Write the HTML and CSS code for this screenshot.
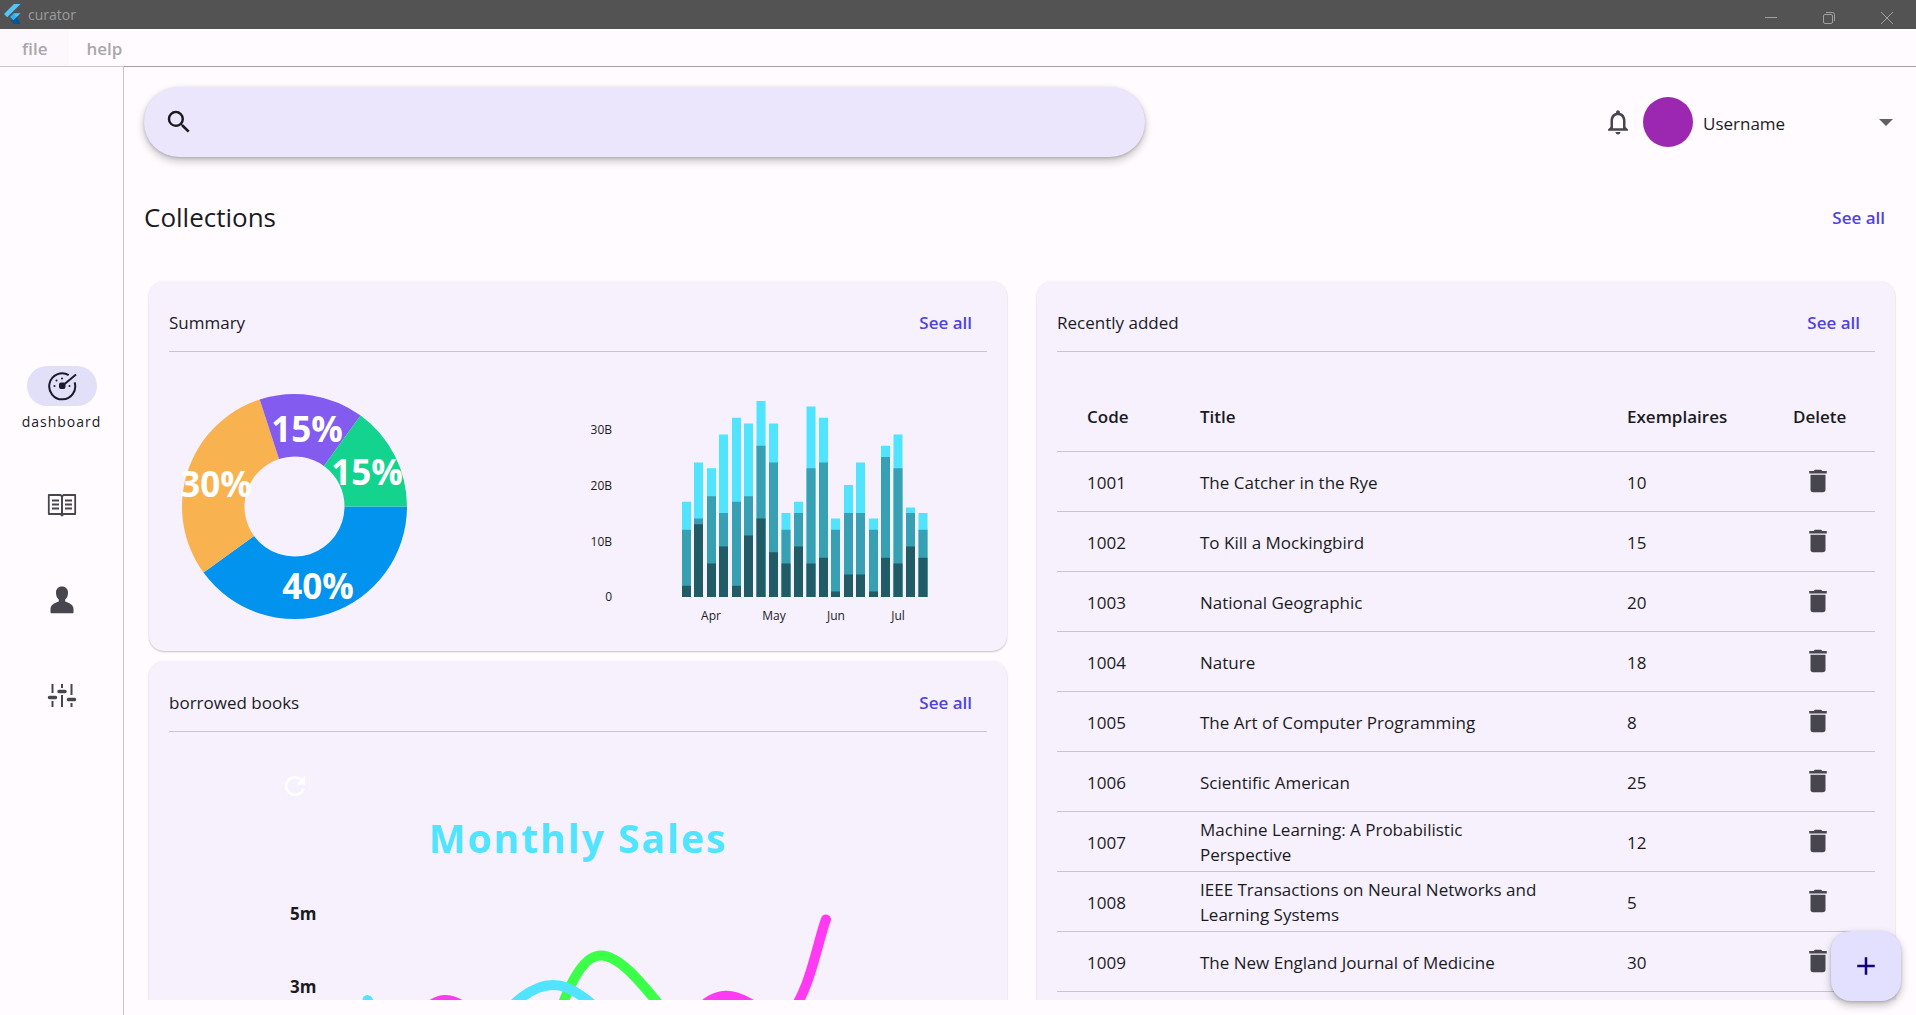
FILE: index.html
```html
<!DOCTYPE html>
<html lang="en">
<head>
<meta charset="utf-8">
<title>curator</title>
<link rel="stylesheet" href="styles.css">
</head>
<body>
<div class="window">
  <header class="titlebar">
    <svg class="logo" width="17" height="20" viewBox="0 0 17 20" aria-hidden="true">
      <path d="M10 0h6.500L3.200 13.300 0 10z" fill="#54c5f8"/>
      <path d="M10 9.300h6.500L9.700 16 6.400 12.900z" fill="#54c5f8"/>
      <path d="M6.400 12.900 9.700 9.700 13 13 9.700 16.200z" fill="#29b6f6"/>
      <path d="M9.700 16.200 13 13l3.500 7H10L6.400 16.300z" fill="#01579b"/>
    </svg>
    <span class="app-name">curator</span>
    <div class="window-controls">
      <button class="window-button" aria-label="Minimize"><svg width="14" height="14" viewBox="0 0 14 14"><path d="M1 6.500h12"/></svg></button>
      <button class="window-button" aria-label="Restore"><svg width="14" height="14" viewBox="0 0 14 14"><rect x="1.500" y="3.500" width="9" height="9" rx="1.500"/><path d="M4 1.500h6.500a2 2 0 0 1 2 2V10"/></svg></button>
      <button class="window-button" aria-label="Close"><svg width="14" height="14" viewBox="0 0 14 14"><path d="M1 1l12 12M13 1 1 13"/></svg></button>
    </div>
  </header>

  <nav class="menubar">
    <button class="menu-button menu-active">file</button>
    <button class="menu-button">help</button>
  </nav>

  <div class="workspace">
    <nav class="rail">
      <a class="rail-item rail-current" href="#dashboard">
        <span class="rail-pill">
          <svg width="30" height="30" viewBox="0 0 30 30" fill="none" stroke="#1a1a2c" stroke-width="2">
            <path d="M21.700 4.100A13 13 0 1 0 27.600 11.400M17 13.500 29 3.500"/>
            <rect x="13" y="12.500" width="4.500" height="4.500" rx="1" fill="#1a1a2c"/>
            <g fill="#1a1a2c" stroke="none"><circle cx="7.500" cy="15" r="1"/><circle cx="9.500" cy="9.500" r="1"/><circle cx="15" cy="7.500" r="1"/><circle cx="22.500" cy="15" r="1"/></g>
          </svg>
        </span>
        <span class="rail-label">dashboard</span>
      </a>
      <a class="rail-item" href="#books" aria-label="Books">
        <svg width="30" height="30" viewBox="0 0 30 30" fill="none" stroke="#47464f" stroke-width="1.800">
          <path d="M15 6.500 13.500 5H1.800v19h11.700L15 25.500 16.500 24h11.700V5H16.500z" stroke-linejoin="round"/>
          <path d="M15 6v19" stroke-width="2"/>
          <path d="M5 10.500h7M5 14.500h7M5 18.500h7M18 10.500h7M18 14.500h7M18 18.500h7"/>
        </svg>
      </a>
      <a class="rail-item" href="#members" aria-label="Members">
        <svg width="30" height="30" viewBox="0 0 30 30" fill="#47464f">
          <path d="M15 1.500c-3.500 0-6 2.300-6 6.200 0 3 1 5.300 2.800 6.900v1.800c-4 1.500-8.300 3-8.300 7.600v3.200c0 .6.400 1 1 1h21c.6 0 1-.4 1-1V24c0-4.600-4.300-6.100-8.300-7.600v-1.800C20 13 21 10.700 21 7.700c0-3.900-2.500-6.200-6-6.200z"/>
        </svg>
      </a>
      <a class="rail-item" href="#settings" aria-label="Settings">
        <svg width="30" height="30" viewBox="0 0 30 30" fill="none" stroke="#47464f" stroke-width="2">
          <path d="M5.500 4v9M5.500 21v6M15 4v4M15 15v12M24.500 4v11M24.500 23v4"/>
          <path d="M2.500 17.500h6M12 11.500h6M21.500 19.500h6" stroke-width="3.500" stroke-linecap="round"/>
        </svg>
      </a>
    </nav>

    <main class="main">
      <div class="topbar">
        <label class="search">
          <svg width="30" height="30" viewBox="0 0 24 24" fill="#1b1b1f"><path d="M15.500 14h-.79l-.28-.27A6.471 6.471 0 0 0 16 9.500 6.500 6.500 0 1 0 9.500 16c1.610 0 3.090-.59 4.230-1.570l.27.28v.79l5 4.990L20.490 19l-4.990-5zm-6 0C7.010 14 5 11.990 5 9.500S7.010 5 9.500 5 14 7.010 14 9.500 11.990 14 9.500 14z"/></svg>
          <input class="search-input" type="search" aria-label="Search">
        </label>
        <div class="account">
          <button class="icon-button" aria-label="Notifications">
            <svg width="30" height="30" viewBox="0 0 24 24" fill="#47464f"><path d="M12 22c1.100 0 2-.9 2-2h-4c0 1.100.9 2 2 2zm6-6v-5c0-3.070-1.630-5.640-4.500-6.320V4c0-.83-.67-1.500-1.500-1.500s-1.500.67-1.500 1.500v.68C7.640 5.360 6 7.920 6 11v5l-2 2v1h16v-1l-2-2zm-2 1H8v-6c0-2.480 1.510-4.500 4-4.500s4 2.020 4 4.500v6z"/></svg>
          </button>
          <span class="avatar"></span>
          <span class="user-field">
            <select class="user-select" aria-label="Account"><option>Username</option></select>
            <svg class="user-arrow" width="14" height="7" viewBox="0 0 14 7"><path d="M0 0h14L7 7z" fill="#606060"/></svg>
          </span>
        </div>
      </div>

      <div class="section-head">
        <h1 class="section-title">Collections</h1>
        <a class="see-all" href="#collections">See all</a>
      </div>

      <div class="board">
        <div class="column">
          <section class="card">
            <div class="card-head">
              <h2 class="card-title">Summary</h2>
              <a class="see-all" href="#summary">See all</a>
            </div>
            <div class="summary">
              <svg class="pie" width="225" height="225" viewBox="0 0 225 225">
                <path fill="#0293ee" d="M225 112.500A112.500 112.500 0 0 1 21.500 178.600L72 141.900A50 50 0 0 0 162.500 112.500z"/>
                <path fill="#f8b250" d="M21.500 178.600A112.500 112.500 0 0 1 77.700 5.500L97 65A50 50 0 0 0 72 141.900z"/>
                <path fill="#845bef" d="M77.700 5.500A112.500 112.500 0 0 1 178.600 21.500L141.900 72A50 50 0 0 0 97 65z"/>
                <path fill="#13d38e" d="M178.600 21.500A112.500 112.500 0 0 1 225 112.500H162.500A50 50 0 0 0 141.900 72z"/>
                <text class="pie-label" x="136" y="205">40%</text>
                <text class="pie-label" x="34" y="103">30%</text>
                <text class="pie-label" x="125" y="48">15%</text>
                <text class="pie-label" x="185" y="91">15%</text>
              </svg>
              <svg class="bars" width="360" height="236" viewBox="0 0 360 236">
                <g fill="none" stroke-width="9" transform="translate(0 203) scale(1 -5.600)">
                  <path stroke="#50e4ff" d="M106.500 0V17M118.500 0V24M131.500 0V23M143.500 0V29M156.500 0V32M168.500 0V31M181 0V35M193.500 0V31M206 0V15M218.500 0V17M231 0V34M243.500 0V32M255.500 0V14M268.500 0V20M280.500 0V24M293.500 0V14M305.500 0V27M318 0V29M330.500 0V16M343 0V15"/>
                  <path stroke="#38a0b3" d="M106.500 0V12M118.500 0V14M131.500 0V18M143.500 0V15M156.500 0V17M168.500 0V18M181 0V27M193.500 0V24M206 0V12M218.500 0V15M231 0V23M243.500 0V24M255.500 0V12M268.500 0V15M280.500 0V15M293.500 0V12M305.500 0V25M318 0V23M330.500 0V15M343 0V12"/>
                  <path stroke="#205b66" d="M106.500 0V2M118.500 0V13M131.500 0V6M143.500 0V9M156.500 0V2M168.500 0V11M181 0V14M193.500 0V8M206 0V6M218.500 0V9M231 0V6M243.500 0V7M255.500 0V1M268.500 0V4M280.500 0V4M293.500 0V1M305.500 0V7M318 0V6M330.500 0V9M343 0V7"/>
                </g>
                <g class="axis axis-y">
                  <text x="32" y="40">30B</text>
                  <text x="32" y="96">20B</text>
                  <text x="32" y="152">10B</text>
                  <text x="32" y="207">0</text>
                </g>
                <g class="axis axis-x">
                  <text x="131" y="226">Apr</text>
                  <text x="194" y="226">May</text>
                  <text x="256" y="226">Jun</text>
                  <text x="318" y="226">Jul</text>
                </g>
              </svg>
            </div>
          </section>

          <section class="card">
            <div class="card-head">
              <h2 class="card-title">borrowed books</h2>
              <a class="see-all" href="#borrowed">See all</a>
            </div>
            <div class="sales">
              <button class="icon-button" aria-label="Refresh">
                <svg width="30" height="30" viewBox="0 0 24 24" fill="#fff"><path d="M17.650 6.350A7.958 7.958 0 0 0 12 4c-4.420 0-7.990 3.580-7.990 8s3.570 8 7.990 8c3.730 0 6.840-2.550 7.730-6h-2.080A5.990 5.990 0 0 1 12 18c-3.310 0-6-2.690-6-6s2.690-6 6-6c1.660 0 3.140.69 4.220 1.780L13 11h7V4l-2.350 2.350z"/></svg>
              </button>
              <h3 class="sales-title">Monthly Sales</h3>
              <svg class="lines" width="596" height="260" viewBox="280 900 596 260">
                <g fill="none" stroke-width="10" stroke-linecap="round">
                  <path stroke="#3bff49" d="M367.500 1132C367.500 1132 417 1100 444 1095S494 1127 520 1102.500 563 964 596.700 956 678 1043 711 1058.600 768 1041 788 1044 819 1068 826 1073"/>
                  <path stroke="#ff3af2" d="M367.500 1132C367.500 1132 404 1002.600 444 1000S550 1117 596.700 1117 678 1018 711 1000 768 1029 788 1014.700 819 936 826 919.500"/>
                  <path stroke="#50e4ff" d="M367.500 1000C367.500 1000 410.500 1068.500 444 1066S512 978 558.500 985.400 664.500 1103 711 1110 806 1037 826 1022"/>
                </g>
                <text class="sales-axis" x="290" y="920">5m</text>
                <text class="sales-axis" x="290" y="993">3m</text>
              </svg>
            </div>
          </section>
        </div>

        <section class="card">
          <div class="card-head">
            <h2 class="card-title">Recently added</h2>
            <a class="see-all" href="#recent">See all</a>
          </div>
          <svg class="symbols" width="0" height="0" aria-hidden="true">
            <symbol id="trash" viewBox="0 0 24 24"><path d="M6 19c0 1.100.9 2 2 2h8c1.100 0 2-.9 2-2V7H6v12zM19 4h-3.500l-1-1h-5l-1 1H5v2h14V4z"/></symbol>
          </svg>
          <table class="books">
            <thead>
              <tr><th class="col-code">Code</th><th class="col-title">Title</th><th class="col-count">Exemplaires</th><th class="col-delete">Delete</th></tr>
            </thead>
            <tbody>
              <tr><td>1001</td><td>The Catcher in the Rye</td><td>10</td><td><button class="icon-button trash" aria-label="Delete 1001"><svg width="30" height="30"><use href="#trash"/></svg></button></td></tr>
              <tr><td>1002</td><td>To Kill a Mockingbird</td><td>15</td><td><button class="icon-button trash" aria-label="Delete 1002"><svg width="30" height="30"><use href="#trash"/></svg></button></td></tr>
              <tr><td>1003</td><td>National Geographic</td><td>20</td><td><button class="icon-button trash" aria-label="Delete 1003"><svg width="30" height="30"><use href="#trash"/></svg></button></td></tr>
              <tr><td>1004</td><td>Nature</td><td>18</td><td><button class="icon-button trash" aria-label="Delete 1004"><svg width="30" height="30"><use href="#trash"/></svg></button></td></tr>
              <tr><td>1005</td><td>The Art of Computer Programming</td><td>8</td><td><button class="icon-button trash" aria-label="Delete 1005"><svg width="30" height="30"><use href="#trash"/></svg></button></td></tr>
              <tr><td>1006</td><td>Scientific American</td><td>25</td><td><button class="icon-button trash" aria-label="Delete 1006"><svg width="30" height="30"><use href="#trash"/></svg></button></td></tr>
              <tr><td>1007</td><td>Machine Learning: A Probabilistic Perspective</td><td>12</td><td><button class="icon-button trash" aria-label="Delete 1007"><svg width="30" height="30"><use href="#trash"/></svg></button></td></tr>
              <tr><td>1008</td><td>IEEE Transactions on Neural Networks and Learning Systems</td><td>5</td><td><button class="icon-button trash" aria-label="Delete 1008"><svg width="30" height="30"><use href="#trash"/></svg></button></td></tr>
              <tr><td>1009</td><td>The New England Journal of Medicine</td><td>30</td><td><button class="icon-button trash" aria-label="Delete 1009"><svg width="30" height="30"><use href="#trash"/></svg></button></td></tr>
            </tbody>
          </table>
        </section>
      </div>
    </main>
  </div>

  <button class="fab" aria-label="Add">
    <svg width="30" height="30" viewBox="0 0 24 24" fill="#160078"><path d="M19 13h-6v6h-2v-6H5v-2h6V5h2v6h6v2z"/></svg>
  </button>
</div>
</body>
</html>
```
FILE: styles.css
```css
* { box-sizing: border-box; }

body {
  margin: 0;
  background: #fffbff;
  color: #1b1b1f;
  font: 17px/25px "Open Sans", "Noto Sans", sans-serif;
}

button, select, input {
  border: 0;
  background: none;
  color: inherit;
  font: inherit;
}

button { padding: 0; }
a { color: inherit; text-decoration: none; }
svg { display: block; flex: none; }
h1, h2, h3 { margin: 0; font-weight: 400; }

.window {
  display: flex;
  flex-direction: column;
  height: 100vh;
}

/* Window frame */
.titlebar {
  display: flex;
  flex: none;
  height: 29px;
  padding: 4px 0 0 4px;
  background: #535353;
  color: #9c9c9c;
}

.app-name {
  margin-left: 7px;
  font-size: 14px;
  line-height: 22px;
}

.window-controls { display: flex; margin-left: auto; }

.window-button {
  display: grid;
  place-items: center;
  width: 58px;
  height: 28px;
}

.window-button svg { fill: none; stroke: #a0a0a0; }

.menubar {
  display: flex;
  flex: none;
  height: 37px;
}

.menu-button {
  padding: 2px 22px 0;
  color: #a9a7ab;
  font-weight: 600;
}

.menu-button + .menu-button { padding: 2px 17px 0; }
.menu-active { background: #fdf8fc; }

.workspace {
  display: flex;
  flex: 1;
  min-height: 0;
}

/* Navigation rail */
.rail {
  display: flex;
  flex: none;
  flex-direction: column;
  align-items: center;
  justify-content: center;
  gap: 55px;
  width: 124px;
  padding-bottom: 2px;
  border-top: 1px solid #c8c5d0;
  border-right: 1px solid #c8c5d0;
}

.rail-item {
  display: flex;
  flex-direction: column;
  align-items: center;
  justify-content: center;
  min-height: 40px;
}

.rail-current { height: 64px; justify-content: flex-start; }

.rail-pill {
  display: grid;
  flex: none;
  place-items: center;
  width: 70px;
  height: 40px;
  border-radius: 20px;
  background: #e2e0f9;
}

.rail-label {
  padding-top: 6px;
  font-size: 14px;
  font-weight: 500;
  letter-spacing: 1px;
  line-height: 20px;
}

/* Main area */
.main {
  display: flex;
  flex: 1;
  flex-direction: column;
  min-width: 0;
  padding: 20px 16px 15px 20px;
  border-top: 1px solid #a5a1a8;
}

.topbar {
  display: grid;
  flex: none;
  grid-template-columns: 57fr 43fr;
  align-items: center;
}

.search {
  display: flex;
  align-items: center;
  height: 70px;
  padding: 0 20px;
  border-radius: 35px;
  background: #ebe6fb;
  box-shadow: 0 4px 8px rgba(0, 0, 0, .24), 0 1px 3px rgba(0, 0, 0, .16);
}

.search-input {
  flex: 1;
  height: 50px;
  outline: 0;
}

.account {
  display: flex;
  align-items: center;
  justify-content: flex-end;
}

.icon-button { display: block; cursor: pointer; }

.avatar {
  width: 50px;
  height: 50px;
  margin: 0 10px;
  border-radius: 50%;
  background: #9c27b0;
}

.user-field { display: grid; align-items: center; width: 197px; }

.user-select {
  grid-area: 1 / 1;
  height: 50px;
  padding: 2px 0 0;
  appearance: none;
}

.user-arrow {
  grid-area: 1 / 1;
  justify-self: end;
  margin-right: 7px;
  pointer-events: none;
}

.section-head {
  display: flex;
  flex: none;
  align-items: center;
  justify-content: space-between;
  height: 60px;
  margin-top: 30px;
  padding-right: 15px;
}

.section-title { font-size: 26px; line-height: 36px; }

.see-all { color: #4f43e0; font-weight: 600; }

.board {
  display: grid;
  flex: 1;
  grid-template-columns: 1fr 1fr;
  gap: 30px;
  min-height: 0;
  margin-top: 30px;
  padding: 4px 5px 0;
  overflow: auto;
  scrollbar-width: none;
}

.column {
  display: flex;
  flex-direction: column;
  gap: 10px;
}

.card {
  padding: 0 20px;
  border-radius: 15px;
  background: #f6f1fd;
  box-shadow: 0 1px 2px rgba(0, 0, 0, .24);
}

.card-head {
  display: flex;
  align-items: center;
  justify-content: space-between;
  height: 71px;
  padding: 12px 15px 0 0;
  border-bottom: 1px solid #c8c5d0;
}

.card-title { font-size: 17px; }

/* Summary charts */
.summary {
  display: flex;
  justify-content: space-between;
  padding: 42px 47px 21px 13px;
}

.pie { overflow: visible; }

.pie-label {
  fill: #fff;
  font-size: 35px;
  font-weight: 700;
  text-anchor: middle;
}

.axis { fill: #1b1b1f; font-size: 12px; }
.axis-y { text-anchor: end; }
.axis-x { text-anchor: middle; }

/* Monthly sales chart */
.sales {
  display: flex;
  flex-direction: column;
  width: 596px;
  margin: 0 auto;
  padding-top: 39px;
}

.sales-title {
  margin: 10px 0 35px;
  color: #50e4ff;
  font-size: 39px;
  font-weight: 700;
  letter-spacing: 2px;
  line-height: 54px;
  text-align: center;
}

.sales-axis { fill: #1b1b1f; font-weight: 700; }

/* Books table */
.symbols { position: absolute; }

.books {
  width: 100%;
  margin-top: 29px;
  border-collapse: collapse;
  table-layout: fixed;
}

.books tr { height: 60px; border-bottom: 1px solid #c8c5d0; }
.books thead tr { height: 70px; }

.books th, .books td {
  padding: 2px 0 0;
  text-align: left;
}

.books th { font-weight: 600; }
.books td:last-child { padding-top: 0; }
.books th:first-child, .books td:first-child { padding-left: 30px; }
.books td:nth-child(2) { padding-right: 80px; }
.col-code { width: 143px; }
.col-count { width: 166px; }
.col-delete { width: 82px; }

.trash { margin-left: 10px; fill: #47464f; }

/* Floating action */
.fab {
  position: fixed;
  right: 15px;
  bottom: 14px;
  display: grid;
  place-items: center;
  width: 70px;
  height: 70px;
  border-radius: 20px;
  background: #e2dfff;
  box-shadow: 0 4px 8px rgba(0, 0, 0, .26), 0 1px 3px rgba(0, 0, 0, .16);
}
```
